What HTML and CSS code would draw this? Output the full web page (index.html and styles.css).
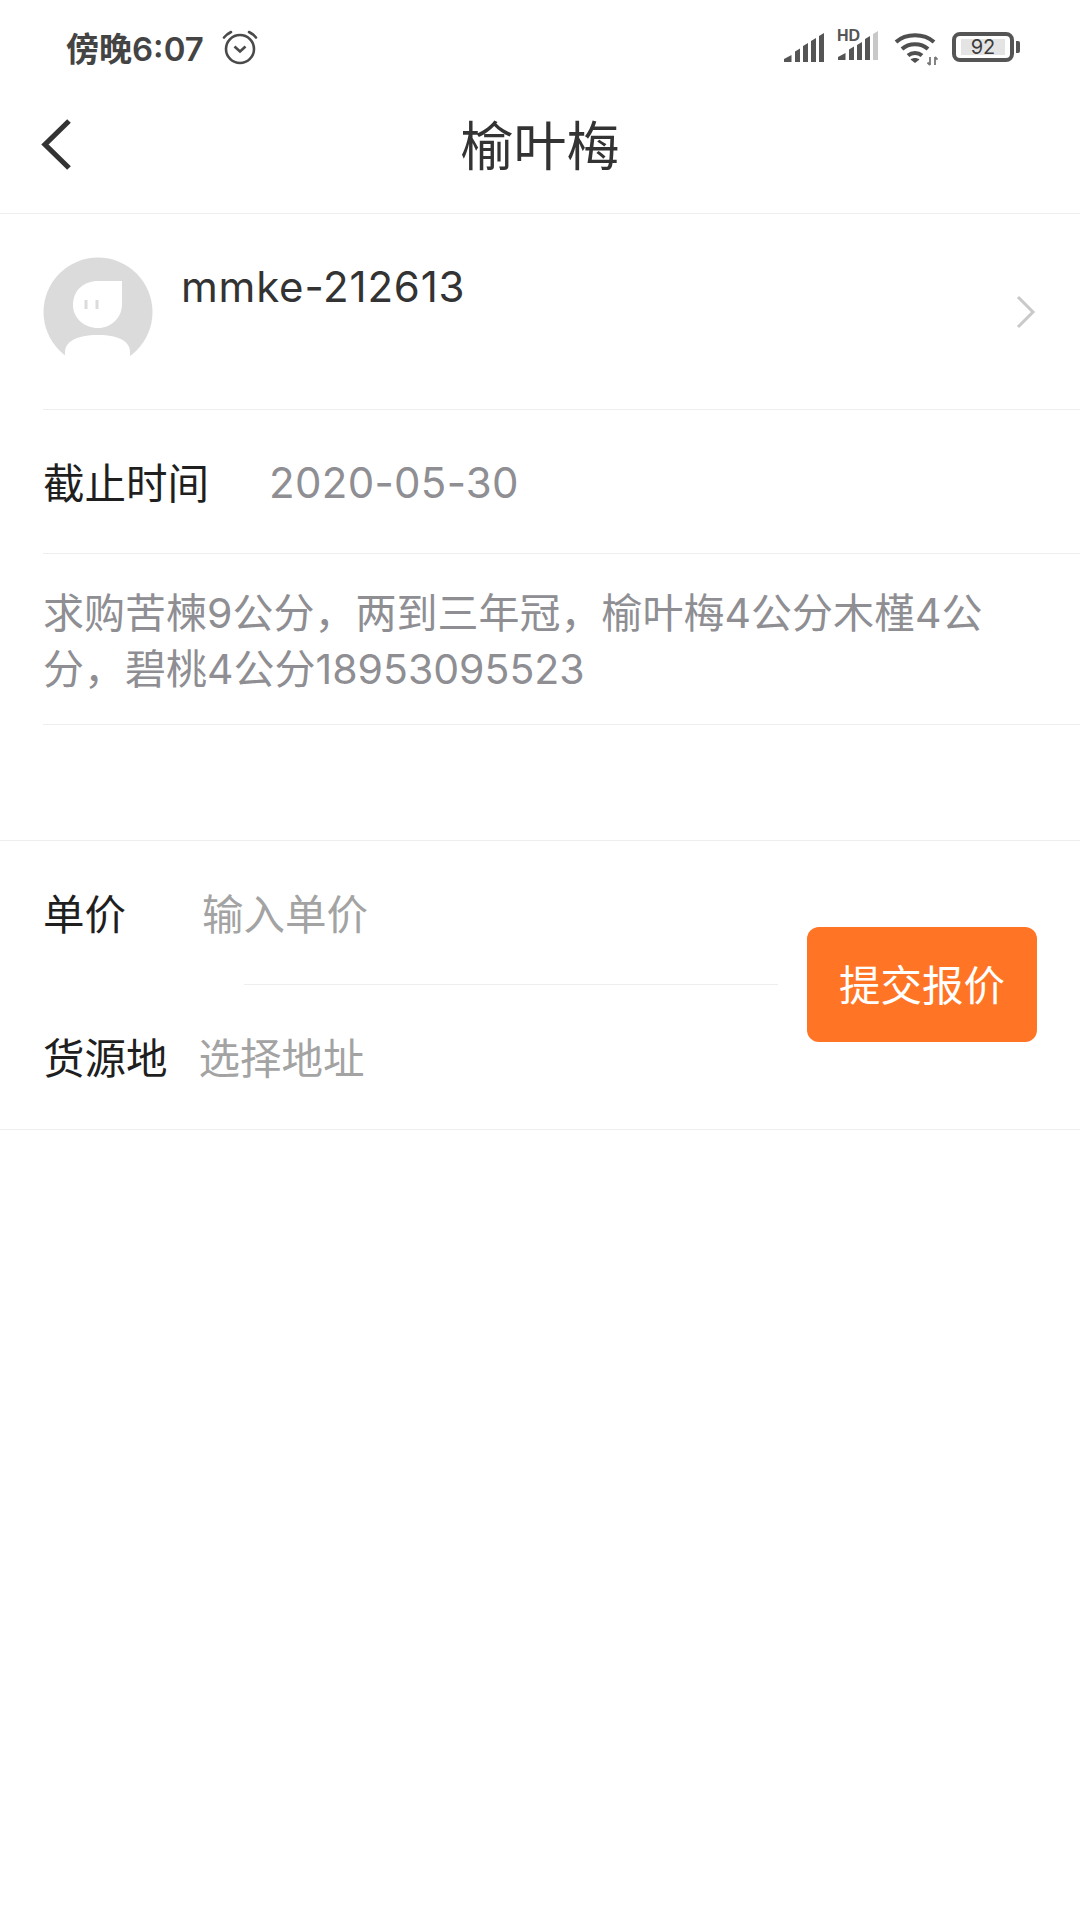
FILE: index.html
```html
<!DOCTYPE html>
<html lang="zh-CN">
<head>
    <meta charset="UTF-8">
    <meta name="viewport" content="width=device-width, initial-scale=1.0">
    <title>榆叶梅</title>
    <link rel="stylesheet" href="styles.css">
</head>
<body>
    <div class="status-bar">
        <div class="status-left">
            <span class="status-time">傍晚6:07</span>
            <svg class="alarm-icon" width="36" height="36" viewBox="0 0 36 36" fill="none" stroke="#4a4a4a" stroke-width="2.6">
                <circle cx="18" cy="20" r="14"/>
                <path d="M12.500 17.500L18 22.500L23.500 17.500"/>
                <path d="M2 8.500C4 6 6 4.500 9 3M34 8.500C32 6 30 4.500 27 3" stroke-linecap="round"/>
            </svg>
        </div>
        <div class="status-right">
            <svg width="40" height="29" viewBox="0 0 40 29" fill="#555">
                <path d="M0 29V26L7.500 22V29ZM11 29V18.500L16 15.500V29ZM19 29V13L24 10V29ZM27 29V8L32 5V29ZM35 29V3L40 0V29Z"/>
            </svg>
            <div class="hd-signal">
                <span class="hd-label">HD</span>
                <svg width="40" height="29" viewBox="0 0 40 29" fill="#555">
                    <path d="M0 29V26L7.500 22V29ZM11 29V18.500L16 15.500V29ZM19 29V14L24 11V29ZM27 29V8L32 5V29Z"/>
                    <path d="M35 29V3L40 0V29Z" fill="#c8c8c8"/>
                </svg>
            </div>
            <svg class="wifi-icon" width="44" height="34" viewBox="0 0 44 34" fill="none" stroke="#4f4f4f" stroke-width="4">
                <path d="M2 10C12 1 30 1 40 10"/>
                <path d="M8 17C15 10.500 27 10.500 34 17"/>
                <path d="M14 23.500C18 20 24 20 28 23.500"/>
                <path d="M16.500 27.500C19 25.500 23 25.500 25.500 27.500L21 31Z" fill="#4f4f4f" stroke="none"/>
                <path d="M36 25V33M33.500 30.500L36 33M41 25V33M41 25L43.500 27.500" stroke-width="1.800" stroke="#777"/>
            </svg>
            <div class="battery">
                <div class="battery-body"><span class="battery-level">92</span></div>
                <div class="battery-tip"></div>
            </div>
        </div>
    </div>

    <header class="title-bar">
        <svg class="back-icon" width="34" height="54" viewBox="0 0 34 54" fill="none" stroke="#333" stroke-width="5.200">
            <path d="M29 3L5 26.500L29 50"/>
        </svg>
        <h1 class="title">榆叶梅</h1>
    </header>

    <section class="seller-row">
        <svg class="avatar" width="110" height="110" viewBox="0 0 110 110">
            <circle cx="55" cy="55" r="54.500" fill="#dbdbdb"/>
            <path d="M30 48C30 33 41 24 55 24H79V47C79 61 68 71 55 71C41 71 30 61 30 48Z" fill="#fff"/>
            <path d="M43 43V52M54 43V52" stroke="#dbdbdb" stroke-width="3"/>
            <path d="M22 110V95C22 85 33 78 55 78C77 78 87 85 87 95V110Z" fill="#fff"/>
        </svg>
        <div class="seller-name">mmke-212613</div>
        <svg class="more-icon" width="22" height="36" viewBox="0 0 22 36" fill="none" stroke="#c9c9c9" stroke-width="3">
            <path d="M3 3L18 18L3 33"/>
        </svg>
    </section>

    <div class="deadline-row">
        <span class="field-label">截止时间</span>
        <span class="deadline-value">2020-05-30</span>
    </div>

    <div class="desc-row">求购苦楝9公分，两到三年冠，榆叶梅4公分木槿4公分，碧桃4公分18953095523</div>

    <div class="spacer"></div>

    <section class="quote-form">
        <div class="quote-fields">
            <div class="quote-field price-field">
                <span class="field-label">单价</span>
                <span class="field-hint">输入单价</span>
            </div>
            <div class="quote-field origin-field">
                <span class="field-label">货源地</span>
                <span class="field-hint">选择地址</span>
            </div>
        </div>
        <button class="submit-btn">提交报价</button>
    </section>
</body>
</html>
```

FILE: styles.css
```css
* {
    box-sizing: border-box;
}
body {
    margin: 0;
    width: 1080px;
    height: 1920px;
    overflow: hidden;
    background-color: #fff;
    font-family: Inter, "Noto Sans CJK SC", "Noto Sans", sans-serif;
    color: #1f1f1f;
}
.status-bar {
    height: 94px;
    padding: 0 60px 0 66px;
    display: flex;
    justify-content: space-between;
    align-items: center;
}
.status-left {
    display: flex;
    align-items: center;
}
.status-time {
    font-size: 33px;
    font-weight: 600;
    color: #444;
}
.alarm-icon {
    margin-left: 18px;
}
.status-right {
    display: flex;
    align-items: center;
}
.hd-signal {
    position: relative;
    margin-left: 14px;
}
.hd-label {
    position: absolute;
    left: -1px;
    top: -2px;
    font-size: 16px;
    font-weight: 700;
    line-height: 14px;
    color: #555;
    font-family: "Liberation Sans", sans-serif;
}
.wifi-icon {
    margin: 4px 0 0 16px;
}
.battery {
    margin-left: 14px;
    display: flex;
    align-items: center;
}
.battery-body {
    width: 62px;
    height: 30px;
    padding: 3px 5px;
    border: 4px solid #555;
    border-radius: 8px;
}
.battery-level {
    display: block;
    height: 16px;
    background-color: #e4e4e4;
    font-size: 20px;
    line-height: 16px;
    text-align: center;
    color: #3c3c3c;
}
.battery-tip {
    width: 4px;
    height: 12px;
    margin-left: 2px;
    border-radius: 0 2px 2px 0;
    background-color: #555;
}
.title-bar {
    position: relative;
    height: 120px;
    border-bottom: 1px solid #eee;
    display: flex;
    align-items: center;
    justify-content: center;
}
.back-icon {
    position: absolute;
    left: 40px;
    top: 24px;
}
.title {
    margin: 0 0 21px;
    font-family: "Noto Sans CJK SC", sans-serif;
    font-size: 53px;
    font-weight: 400;
    color: #333;
}
.seller-row {
    height: 196px;
    margin-left: 43px;
    border-bottom: 1px solid #eee;
    position: relative;
    display: flex;
    padding-top: 45px;
}
.avatar {
    margin-top: -2px;
}
.seller-name {
    margin-left: 28px;
    font-size: 42px;
    line-height: 56px;
    letter-spacing: 0.8px;
    color: #333;
}
.more-icon {
    position: absolute;
    right: 43px;
    top: 80px;
}
.deadline-row {
    height: 144px;
    margin-left: 43px;
    padding-bottom: 2px;
    border-bottom: 1px solid #eee;
    display: flex;
    align-items: center;
}
.field-label {
    font-family: "Noto Sans CJK SC", sans-serif;
    font-size: 41.5px;
    color: #1f1f1f;
}
.deadline-value {
    margin: 4px 0 0 60px;
    font-size: 42px;
    letter-spacing: 0.3px;
    color: #8e8e93;
}
.desc-row {
    height: 171px;
    margin-left: 43px;
    padding: 31px 80px 0 0;
    border-bottom: 1px solid #eee;
    font-size: 41px;
    line-height: 56px;
    color: #8e8e93;
}
.spacer {
    height: 116px;
    border-bottom: 1px solid #eee;
}
.quote-form {
    height: 289px;
    padding-left: 43px;
    border-bottom: 1px solid #eee;
    position: relative;
}
.quote-field {
    display: flex;
    align-items: center;
    padding-bottom: 3px;
}
.price-field {
    height: 144px;
    position: relative;
}
.price-field::after {
    content: "";
    position: absolute;
    left: 201px;
    bottom: 0;
    width: 534px;
    border-bottom: 1px solid #eee;
}
.origin-field {
    height: 144px;
}
.field-hint {
    font-family: "Noto Sans CJK SC", sans-serif;
    font-size: 41.5px;
    color: #a3a3a3;
}
.price-field .field-hint {
    margin-left: 76px;
}
.origin-field .field-hint {
    margin-left: 31px;
}
.submit-btn {
    position: absolute;
    left: 807px;
    top: 86px;
    width: 230px;
    height: 115px;
    padding: 0 0 4px;
    border: none;
    border-radius: 12px;
    background-color: #ff7525;
    color: #fff;
    font-family: "Noto Sans CJK SC", sans-serif;
    font-size: 41.5px;
}
```
